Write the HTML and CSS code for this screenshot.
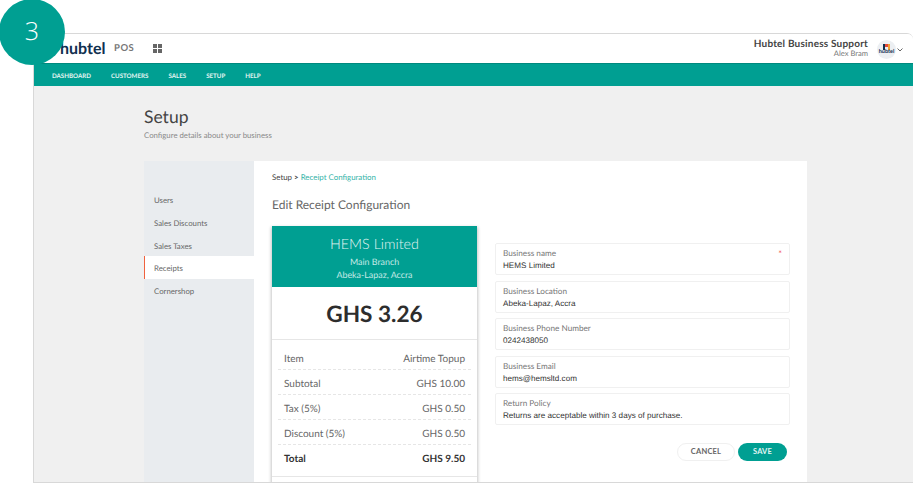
FILE: index.html
```html
<!DOCTYPE html>
<html lang="en">
<head>
    <meta charset="UTF-8">
    <meta name="viewport" content="width=device-width, initial-scale=1.0">
    <title>Hubtel POS - Setup</title>
    <link rel="stylesheet" href="styles.css">
</head>
<body>
    <div class="step">3</div>
    <div class="window">
        <header class="topbar">
            <div class="brand">
                <span class="logo">hubtel</span>
                <span class="product">POS</span>
                <svg class="apps" width="9" height="9" viewBox="0 0 9 9" fill="#666">
                    <rect width="4" height="4"/><rect x="5" width="4" height="4"/>
                    <rect y="5" width="4" height="4"/><rect x="5" y="5" width="4" height="4"/>
                </svg>
            </div>
            <div class="account">
                <div class="who">
                    <div class="biz">Hubtel Business Support</div>
                    <div class="user">Alex Bram</div>
                </div>
                <div class="avatar">
                    <svg width="7" height="6" viewBox="0 0 7 6">
                        <path d="M0 0h2v6H0z" fill="#10304f"/>
                        <path d="M2 0h3v3H2z" fill="#e0483c"/>
                        <path d="M5 0h2v6H5z" fill="#f0a030"/>
                    </svg>
                    <span class="avatar-name">hubtel</span>
                </div>
                <svg class="caret" width="6" height="4" viewBox="0 0 6 4" fill="none" stroke="#666"><path d="M.5.5 3 3 5.500.5"/></svg>
            </div>
        </header>
        <nav class="mainnav">
            <a>DASHBOARD</a>
            <a>CUSTOMERS</a>
            <a>SALES</a>
            <a>SETUP</a>
            <a>HELP</a>
        </nav>
        <main class="content">
            <h1>Setup</h1>
            <p class="subtitle">Configure details about your business</p>
            <div class="panel">
                <aside class="sidebar">
                    <a>Users</a>
                    <a>Sales Discounts</a>
                    <a>Sales Taxes</a>
                    <a class="active">Receipts</a>
                    <a>Cornershop</a>
                </aside>
                <section class="detail">
                    <div class="crumbs">Setup <b>&gt;</b> <span>Receipt Configuration</span></div>
                    <h2>Edit Receipt Configuration</h2>
                    <div class="columns">
                        <div class="receipt">
                            <div class="receipt-head">
                                <div class="receipt-name">HEMS Limited</div>
                                <div>Main Branch</div>
                                <div>Abeka-Lapaz, Accra</div>
                            </div>
                            <div class="amount">GHS 3.26</div>
                            <div class="lines">
                                <div class="line"><span>Item</span><span>Airtime Topup</span></div>
                                <div class="line"><span>Subtotal</span><span>GHS 10.00</span></div>
                                <div class="line"><span>Tax (5%)</span><span>GHS 0.50</span></div>
                                <div class="line"><span>Discount (5%)</span><span>GHS 0.50</span></div>
                                <div class="line total"><span>Total</span><span>GHS 9.50</span></div>
                            </div>
                        </div>
                        <form class="fields">
                            <div class="field"><label>Business name</label><div class="value">HEMS Limited</div><span class="req">*</span></div>
                            <div class="field"><label>Business Location</label><div class="value">Abeka-Lapaz, Accra</div></div>
                            <div class="field"><label>Business Phone Number</label><div class="value">0242438050</div></div>
                            <div class="field"><label>Business Email</label><div class="value">hems@hemsltd.com</div></div>
                            <div class="field"><label>Return Policy</label><div class="value">Returns are acceptable within 3 days of purchase.</div></div>
                            <div class="actions">
                                <button type="button" class="btn cancel">CANCEL</button>
                                <button type="button" class="btn save">SAVE</button>
                            </div>
                        </form>
                    </div>
                </section>
            </div>
        </main>
    </div>
</body>
</html>
```

FILE: styles.css
```css
html, body {
    margin: 0;
    height: 483px;
    overflow: hidden;
}
body {
    position: relative;
    box-sizing: border-box;
    padding: 33px 0 0 33px;
    background: white;
    font-family: "Lato", "Open Sans", sans-serif;
    color: #444;
    text-rendering: geometricPrecision;
}
.step {
    position: absolute;
    left: -1px;
    top: -1px;
    width: 66px;
    height: 66px;
    border-radius: 50%;
    background: #009f92;
    color: white;
    font-family: "Open Sans", sans-serif;
    font-weight: 300;
    font-size: 25px;
    line-height: 64px;
    text-align: center;
    z-index: 2;
}
.window {
    height: 450px;
    box-sizing: border-box;
    border: 1px solid #d8d8d8;
    border-right: none;
    border-top-right-radius: 6px;
    background: #f0f0f0;
    overflow: hidden;
}
.topbar {
    height: 29px;
    background: white;
    display: flex;
    justify-content: space-between;
    align-items: center;
    padding: 0 10px 0 26px;
}
.brand {
    display: flex;
    align-items: center;
}
.logo {
    font-size: 16px;
    font-weight: 700;
    color: #10304f;
    width: 54px;
}
.product {
    font-size: 9.500px;
    font-weight: 700;
    color: #777;
    letter-spacing: 0.5px;
    width: 39px;
}
.apps {
    margin-top: -1px;
}
.account {
    display: flex;
    align-items: center;
    margin-top: -3px;
}
.who {
    text-align: right;
    margin-right: 9px;
    padding-top: 1px;
}
.biz {
    font-size: 10px;
    font-weight: 700;
    line-height: 10px;
    color: #444;
    letter-spacing: 0.2px;
}
.user {
    font-size: 7.600px;
    line-height: 8px;
    color: #777;
}
.avatar {
    width: 19px;
    height: 19px;
    margin-top: 5px;
    border-radius: 50%;
    background: #eceff2;
    display: flex;
    flex-direction: column;
    align-items: center;
    justify-content: center;
}
.avatar-name {
    font-size: 5.500px;
    line-height: 5px;
    font-weight: 700;
    color: #10304f;
}
.caret {
    margin: 5px 0 0 1px;
}
.mainnav {
    height: 22px;
    background: #009f92;
    border-top: 1px solid #00897e;
    display: flex;
    align-items: center;
    gap: 20px;
    padding-left: 18px;
}
.mainnav a {
    color: #e4f5f3;
    font-size: 6.200px;
    font-weight: 700;
    padding-top: 2px;
}
.content {
    padding: 20px 0 0 110px;
}
h1 {
    margin: 0;
    font-size: 17.500px;
    font-weight: 400;
    line-height: 22px;
    color: #444;
}
.subtitle {
    margin: 1px 0 0;
    font-size: 7.800px;
    line-height: 12px;
    color: #888;
}
.panel {
    display: flex;
    width: 663px;
    height: 322px;
    margin-top: 20px;
}
.sidebar {
    width: 110px;
    padding-top: 27px;
    background: #e9ecef;
    box-sizing: border-box;
}
.sidebar a {
    display: block;
    height: 22.800px;
    line-height: 24px;
    padding-left: 10px;
    font-size: 7.800px;
    color: #666;
}
.sidebar a.active {
    background: white;
    border-left: 1px solid #f0623e;
    padding-left: 9px;
}
.detail {
    flex: 1;
    background: white;
    padding: 10px 17px 0 18px;
}
.crumbs {
    font-size: 7.900px;
    line-height: 12px;
    color: #444;
}
.crumbs span {
    color: #35b3a8;
}
h2 {
    margin: 13px 0 0;
    font-size: 12px;
    font-weight: 400;
    line-height: 18px;
    color: #666;
}
.columns {
    display: flex;
    margin-top: 12px;
    gap: 18px;
}
.receipt {
    width: 205px;
    flex: none;
    height: 270px;
    background: white;
    box-shadow: 0 2px 3px 1px rgba(0, 0, 0, 0.22);
}
.receipt-head {
    height: 61px;
    background: #009f92;
    color: #c4e9e5;
    text-align: center;
    font-size: 8.900px;
    line-height: 13px;
    padding-top: 8px;
    box-sizing: border-box;
}
.receipt-name {
    font-size: 14.300px;
    font-weight: 300;
    line-height: 21px;
    color: #e4f5f3;
}
.amount {
    height: 52px;
    line-height: 54px;
    text-align: center;
    font-size: 22.600px;
    font-weight: 700;
    color: #2d2d2d;
    border-bottom: 1px solid #e6e6e6;
}
.lines {
    padding: 5px 6px 0;
    border-bottom: 1px solid #e6e6e6;
    height: 137px;
    box-sizing: border-box;
}
.line {
    display: flex;
    justify-content: space-between;
    height: 25px;
    box-sizing: border-box;
    line-height: 28px;
    padding: 0 6px;
    border-bottom: 1px dashed #e6e6e6;
    font-size: 10px;
    color: #666;
}
.line.total {
    border-bottom: none;
    font-weight: 700;
    color: #333;
}
.fields {
    width: 295px;
    display: flex;
    flex-direction: column;
    gap: 5.500px;
    padding-top: 17px;
}
.field {
    position: relative;
    height: 32px;
    box-sizing: border-box;
    border: 1px solid #f0f0f0;
    border-radius: 2px;
    padding: 4px 7px 0;
}
.field label {
    display: block;
    font-size: 8.200px;
    line-height: 11px;
    color: #777;
}
.value {
    font-family: "Liberation Sans", Arial, sans-serif;
    font-size: 8.100px;
    line-height: 13px;
    color: #333;
}
.req {
    position: absolute;
    right: 7px;
    top: 4px;
    font-size: 9px;
    line-height: 12px;
    color: #f25c5c;
}
.actions {
    display: flex;
    justify-content: flex-end;
    gap: 3px;
    margin-top: 12px;
    padding-right: 3px;
}
.btn {
    height: 18px;
    padding: 0;
    border-radius: 9px;
    font-family: inherit;
    font-size: 7.500px;
    font-weight: 700;
    letter-spacing: 0.2px;
    cursor: pointer;
}
.cancel {
    width: 58px;
    background: white;
    border: 1px solid #f0f0f0;
    color: #666;
}
.save {
    width: 49px;
    background: #009f92;
    border: none;
    color: #e4f5f3;
}
```
